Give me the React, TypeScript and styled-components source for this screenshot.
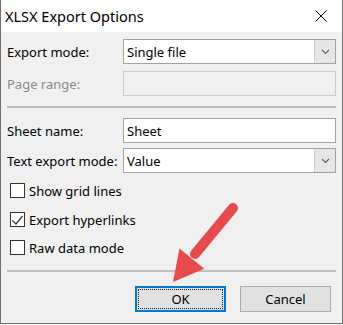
import React from "react";
import styled, { createGlobalStyle } from "styled-components";

const GlobalStyle = createGlobalStyle`
  html, body {
    margin: 0;
    padding: 0;
    background: #ffffff;
  }
  body {
    font-family: "Noto Sans", "Open Sans", sans-serif;
    font-size: 13px;
    color: #000;
  }
`;

interface ICheckProps {
  label: string;
  checked?: boolean;
  top: number;
}

interface IRowProps {
  top: number;
}

const Window = styled.div`
  position: relative;
  width: 343px;
  height: 324px;
  box-sizing: border-box;
  border: 1px solid #6f6f6f;
  border-top: none;
  background: #f0f0f0;
  display: flex;
  flex-direction: column;
`;

const TitleBar = styled.div`
  height: 32px;
  flex: none;
  background: #ffffff;
  display: flex;
  align-items: center;
  justify-content: space-between;
  padding: 0 15px 0 4px;
`;

const Title = styled.span`
  font-size: 14.5px;
  color: #000;
  padding-bottom: 1px;
`;

const CloseIcon = styled.svg`
  width: 12px;
  height: 12px;
  display: block;
`;

const Body = styled.div`
  flex: 1;
  padding: 7px 6px 0 6px;
  display: flex;
  flex-direction: column;
`;

const FormRow = styled.div<IRowProps>`
  display: grid;
  grid-template-columns: 116px 1fr;
  align-items: center;
  height: 25px;
  margin-top: ${(p) => p.top}px;
`;

const Label = styled.label<{ disabled?: boolean }>`
  color: ${(p) => (p.disabled ? "#8a8a8a" : "#000")};
  white-space: nowrap;
`;

const Field = styled.div<{ disabled?: boolean }>`
  height: 25px;
  box-sizing: border-box;
  border: 1px solid ${(p) => (p.disabled ? "#cccccc" : "#a3a3a3")};
  background: ${(p) => (p.disabled ? "#f0f0f0" : "#ffffff")};
  display: flex;
  align-items: center;
  padding-left: 3px;
`;

const Combo = styled(Field)`
  padding-left: 0;
`;

const ComboText = styled.span`
  flex: 1;
  padding-left: 3px;
`;

const DropButton = styled.div`
  width: 21px;
  height: 100%;
  box-sizing: border-box;
  border-left: 1px solid #cfcfcf;
  background: #e6e6e6;
  display: flex;
  align-items: center;
  justify-content: center;
`;

const Separator = styled.div<IRowProps>`
  height: 2px;
  background: #c1c1c1;
  margin-top: ${(p) => p.top}px;
`;

const CheckRow = styled.div<IRowProps>`
  display: flex;
  align-items: center;
  height: 15px;
  padding-left: 3px;
  margin-top: ${(p) => p.top}px;
  gap: 4px;
`;

const Box = styled.div`
  width: 15px;
  height: 15px;
  box-sizing: border-box;
  border: 1px solid #333333;
  background: #ffffff;
  flex: none;
`;

const ButtonBar = styled.div`
  display: flex;
  justify-content: flex-end;
  gap: 14px;
  margin-top: 14px;
  padding-right: 5px;
`;

const Button = styled.button<{ primary?: boolean }>`
  width: 91px;
  height: 26px;
  box-sizing: border-box;
  font: inherit;
  color: #000;
  background: #e1e1e1;
  border: 1px solid ${(p) => (p.primary ? "#0078d7" : "#adadad")};
  box-shadow: ${(p) => (p.primary ? "inset 0 0 0 1px #0078d7" : "none")};
  position: relative;
  padding: 0;
  &::after {
    content: "";
    display: ${(p) => (p.primary ? "block" : "none")};
    position: absolute;
    inset: 2px;
    border: 1px dotted #1a1a1a;
  }
`;

const ArrowLayer = styled.svg`
  position: absolute;
  left: -1px;
  top: 0;
  width: 343px;
  height: 325px;
  pointer-events: none;
`;

const Checkbox = ({ label, checked, top }: ICheckProps) => (
  <CheckRow top={top}>
    <Box>
      {checked && (
        <svg width="13" height="13" viewBox="0 0 13 13">
          <polyline points="1.5,6.5 5,10 11.5,2" fill="none" stroke="#333" strokeWidth="1.2" />
        </svg>
      )}
    </Box>
    <span>{label}</span>
  </CheckRow>
);

const Chevron = () => (
  <svg width="9" height="6" viewBox="0 0 9 6">
    <polyline points="1,1 4.5,4.5 8,1" fill="none" stroke="#606060" strokeWidth="1.1" />
  </svg>
);

export default function App() {
  return (
    <>
      <GlobalStyle />
      <Window>
        <TitleBar>
          <Title>XLSX Export Options</Title>
          <CloseIcon viewBox="0 0 12 12">
            <path d="M0.5 0.5 L11.5 11.5 M11.5 0.5 L0.5 11.5" stroke="#000" strokeWidth="1" />
          </CloseIcon>
        </TitleBar>
        <Body>
          <FormRow top={0}>
            <Label>Export mode:</Label>
            <Combo>
              <ComboText>Single file</ComboText>
              <DropButton>
                <Chevron />
              </DropButton>
            </Combo>
          </FormRow>
          <FormRow top={7}>
            <Label disabled>Page range:</Label>
            <Field disabled />
          </FormRow>
          <Separator top={10} />
          <FormRow top={10}>
            <Label>Sheet name:</Label>
            <Field>Sheet</Field>
          </FormRow>
          <FormRow top={5}>
            <Label>Text export mode:</Label>
            <Combo>
              <ComboText>Value</ComboText>
              <DropButton>
                <Chevron />
              </DropButton>
            </Combo>
          </FormRow>
          <Checkbox label="Show grid lines" top={10} />
          <Checkbox label="Export hyperlinks" checked top={14} />
          <Checkbox label="Raw data mode" top={13} />
          <Separator top={15} />
          <ButtonBar>
            <Button primary>OK</Button>
            <Button>Cancel</Button>
          </ButtonBar>
        </Body>
        <ArrowLayer viewBox="0 0 343 325">
          <line x1="233" y1="208" x2="195" y2="254" stroke="#e8494b" strokeWidth="10" strokeLinecap="round" />
          <polygon points="173,282 179.5,248.6 204.3,268.8" fill="#e8494b" />
        </ArrowLayer>
      </Window>
    </>
  );
}
